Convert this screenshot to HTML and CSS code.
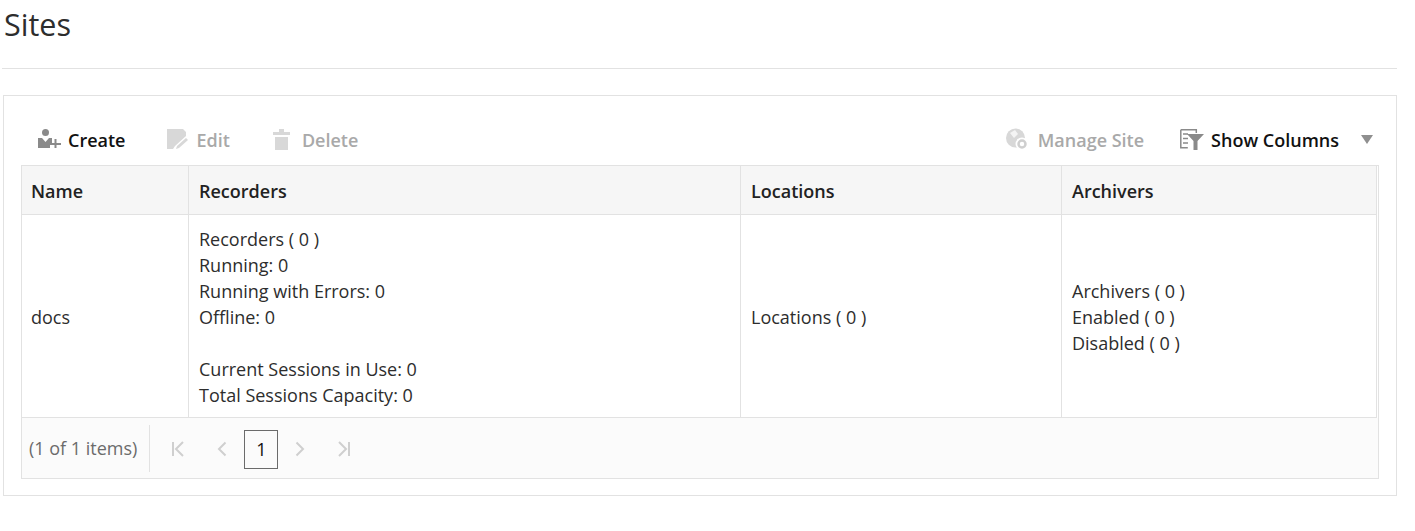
FILE: index.html
```html
<!DOCTYPE html>
<html lang="en">
<head>
  <meta charset="UTF-8" />
  <title>Sites</title>
  <link rel="stylesheet" href="styles.css">
</head>
<body>
  <h1 class="page-title">Sites</h1>

  <div class="panel">
    <div class="toolbar">
      <a class="tool tool-create">
        <svg class="tool-icon" width="24" height="24" viewBox="0 0 24 24">
          <circle cx="7.500" cy="4.500" r="3.500" fill="#8a8a8a"/>
          <path d="M0 10h4l3.500 4L11 10h3v5h-2v5H0z" fill="#8a8a8a"/>
          <path d="M12 16h11M17.500 11v9" fill="none" stroke="#8a8a8a" stroke-width="2"/>
        </svg>
        Create
      </a>
      <a class="tool tool-off tool-edit">
        <svg class="tool-icon" width="23" height="24" viewBox="0 0 23 24">
          <path d="M0 1h16l3 3v4L8 18l-2 3H0z" fill="#d8d8d8"/>
          <path d="M9 21l1-3L19 10l2 2-9 8z" fill="#d8d8d8"/>
        </svg>
        Edit
      </a>
      <a class="tool tool-off tool-delete">
        <svg class="tool-icon" width="23" height="24" viewBox="0 0 23 24">
          <path d="M6 1h5v3h6v3H0V4h6z" fill="#d8d8d8"/>
          <path d="M2 9h13v13H2z" fill="#d8d8d8"/>
        </svg>
        Delete
      </a>
      <span class="toolbar-gap"></span>
      <a class="tool tool-off tool-manage">
        <svg class="tool-icon" width="26" height="24" viewBox="0 0 26 24">
          <circle cx="9.500" cy="10" r="9.500" fill="#d8d8d8"/>
          <path d="M4 5l5-3 3 4-4 4zM11 11l5-1 1 3-5 3z" fill="#f4f4f4"/>
          <circle cx="16" cy="16" r="6.500" fill="#fff"/>
          <circle cx="16" cy="16" r="3.500" fill="none" stroke="#cfcfcf" stroke-width="2.500"/>
        </svg>
        Manage Site
      </a>
      <a class="tool tool-columns">
        <svg class="tool-icon" width="25" height="24" viewBox="0 0 25 24">
          <path d="M.8 1.800h15.500V5M.8 1.800v18h7" fill="none" stroke="#8a8a8a" stroke-width="1.500"/>
          <path d="M3 6h5M3 10.500h5M3 15h5" stroke="#8a8a8a" stroke-width="1.500"/>
          <path d="M7 6h17l-6.500 7v9h-4v-9z" fill="#8a8a8a"/>
        </svg>
        Show Columns
      </a>
      <span class="caret"></span>
    </div>

    <div class="grid">
      <table class="grid-table">
        <colgroup>
          <col class="col-name">
          <col class="col-recorders">
          <col class="col-locations">
          <col class="col-archivers">
        </colgroup>
        <thead>
          <tr>
            <th>Name</th>
            <th>Recorders</th>
            <th>Locations</th>
            <th>Archivers</th>
          </tr>
        </thead>
        <tbody>
          <tr>
            <td>docs</td>
            <td>
              Recorders ( 0 )<br>
              Running: 0<br>
              Running with Errors: 0<br>
              Offline: 0<br>
              <br>
              Current Sessions in Use: 0<br>
              Total Sessions Capacity: 0
            </td>
            <td>Locations ( 0 )</td>
            <td>
              Archivers ( 0 )<br>
              Enabled ( 0 )<br>
              Disabled ( 0 )
            </td>
          </tr>
        </tbody>
      </table>

      <div class="pager">
        <span class="pager-info">(1 of 1 items)</span>
        <div class="pager-nav">
          <svg class="pager-icon" width="12" height="16" viewBox="0 0 12 16">
            <path d="M1 1v14M11 1L4 8l7 7" fill="none" stroke="#cfcfcf" stroke-width="2"/>
          </svg>
          <svg class="pager-icon pager-prev" width="10" height="16" viewBox="0 0 10 16">
            <path d="M8.500 1.500L2 8l6.500 6.500" fill="none" stroke="#cfcfcf" stroke-width="2"/>
          </svg>
          <span class="pager-page">1</span>
          <svg class="pager-icon pager-next" width="10" height="16" viewBox="0 0 10 16">
            <path d="M1.500 1.500L8 8l-6.500 6.500" fill="none" stroke="#cfcfcf" stroke-width="2"/>
          </svg>
          <svg class="pager-icon pager-last" width="12" height="16" viewBox="0 0 12 16">
            <path d="M1 1l7 7-7 7M11 1v14" fill="none" stroke="#cfcfcf" stroke-width="2"/>
          </svg>
        </div>
      </div>
    </div>
  </div>
</body>
</html>
```

FILE: styles.css
```css
body {
  margin: 0;
  padding: 0 18px 0 2px;
  font-family: "Open Sans", "Noto Sans", sans-serif;
  font-size: 18px;
  line-height: 26px;
  color: #2d2d2d;
  background: #fff;
}

.page-title {
  margin: 0;
  padding: 3px 0 23px 2px;
  height: 42px;
  font-size: 30.500px;
  line-height: 42px;
  font-weight: 400;
  border-bottom: 1px solid #e2e2e2;
}

.panel {
  margin: 26px 0 0 1px;
  height: 399px;
  padding: 0 17px 0 17px;
  border: 1px solid #e2e2e2;
}

.toolbar {
  display: flex;
  align-items: center;
  height: 69px;
  padding-top: 18px;
  box-sizing: border-box;
}

.toolbar-gap {
  flex: 1;
}

.tool {
  display: flex;
  align-items: center;
  font-weight: 600;
  color: #111;
  white-space: nowrap;
}

.tool-icon {
  margin-right: 6px;
}

.tool-off {
  color: #a9a9a9;
}

.tool-create {
  margin-left: 17px;
}

.tool-edit {
  margin-left: 42px;
}

.tool-delete {
  margin-left: 43px;
}

.tool-columns {
  margin-left: 36px;
}

.caret {
  margin-left: 22px;
  margin-right: 6px;
  border-left: 6px solid transparent;
  border-right: 6px solid transparent;
  border-top: 9px solid #8f8f8f;
}

.grid {
  border: 1px solid #e2e2e2;
  height: 312px;
}

.grid-table {
  width: 1355px;
  border-collapse: collapse;
  table-layout: fixed;
}

.col-name {
  width: 166px;
}

.col-recorders {
  width: 552px;
}

.col-locations {
  width: 321px;
}

.grid-table th {
  height: 46px;
  padding: 2px 10px 0 10.500px;
  text-align: left;
  font-weight: 600;
  color: #222;
  background: #f6f6f6;
  border-right: 1px solid #e2e2e2;
  border-bottom: 1px solid #e2e2e2;
}

.grid-table td {
  height: 182px;
  padding: 11px 10px 9px 10.500px;
  vertical-align: middle;
  border-right: 1px solid #e2e2e2;
  border-bottom: 1px solid #e2e2e2;
}

.grid-table th:first-child,
.grid-table td:first-child {
  padding-left: 9px;
}

.pager {
  display: flex;
  align-items: center;
  height: 60px;
  background: #fbfbfb;
}

.pager-info {
  padding: 0 12px 0 7px;
  height: 47px;
  line-height: 47px;
  color: #6b6b6b;
  border-right: 1px solid #e2e2e2;
}

.pager-nav {
  display: flex;
  align-items: center;
  padding: 2px 0 0 22px;
}

.pager-prev {
  margin-left: 33px;
}

.pager-page {
  width: 32px;
  height: 37px;
  margin-left: 17px;
  line-height: 37px;
  text-align: center;
  color: #111;
  border: 1px solid #6b6b6b;
}

.pager-next {
  margin-left: 17px;
}

.pager-last {
  margin-left: 33px;
}
```
